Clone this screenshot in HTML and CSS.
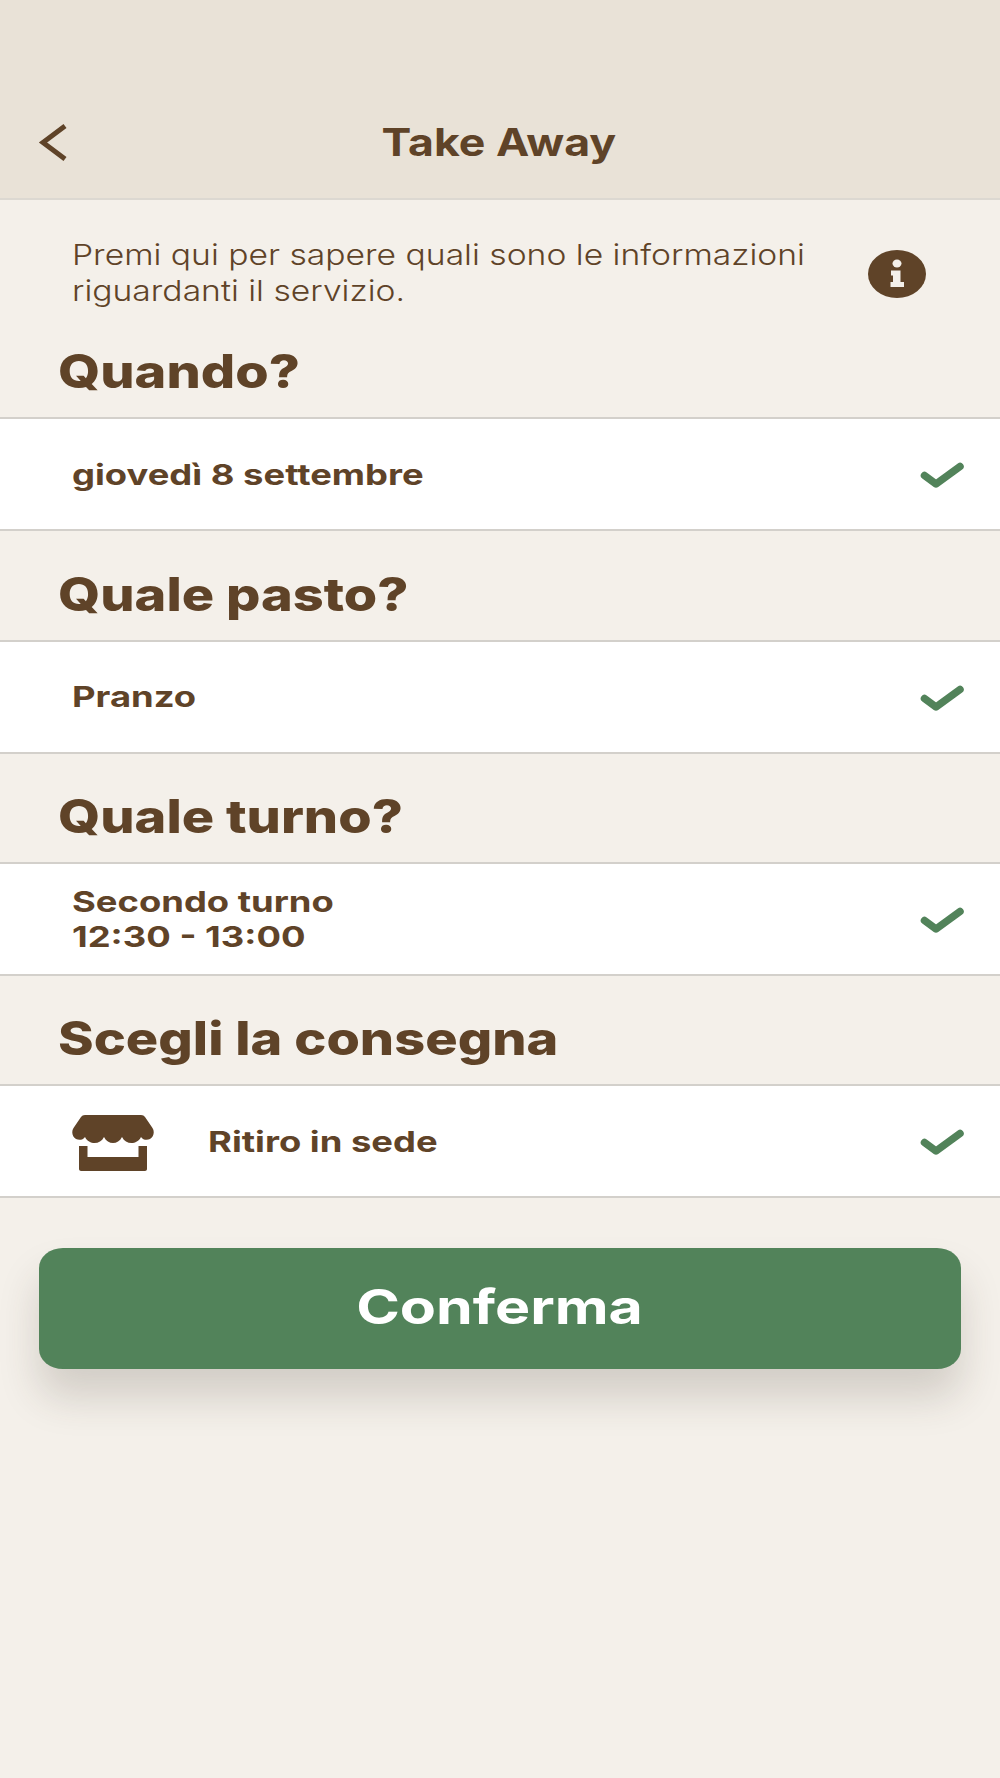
FILE: index.html
```html
<!DOCTYPE html>
<html lang="it">
<head>
<meta charset="utf-8">
<title>Take Away</title>
<link rel="stylesheet" href="styles.css">
</head>
<body>
<header class="topbar">
  <svg class="back" viewBox="0 0 30 40" width="30" height="40"><path d="M27 4 5 20.500 27 37" fill="none" stroke="#5f4328" stroke-width="5"/></svg>
  <h1 class="title"><span class="wide">Take Away</span></h1>
</header>
<main class="content">
  <div class="intro">
    <p class="intro-text"><span class="wide-light">Premi qui per sapere quali sono le informazioni<br>riguardanti il servizio.</span></p>
    <svg class="info" viewBox="0 0 58 48" width="58" height="48"><ellipse cx="29" cy="24" rx="29" ry="24" fill="#5f4328"/><ellipse cx="29" cy="13.500" rx="4.500" ry="4" fill="#f4f0ea"/><path d="M23 20.500h9.500v11.500h3.500v5H22.500v-5H25v-6.500h-2z" fill="#f4f0ea"/></svg>
  </div>
  <section>
    <h2 class="heading"><span class="wide">Quando?</span></h2>
    <div class="row">
      <div class="label"><span class="wide">giovedì 8 settembre</span></div>
      <svg class="check" viewBox="0 0 44 28" width="44" height="28"><path d="M4.500 13.500 16 22 40 4.500" fill="none" stroke="#52835a" stroke-width="7.500" stroke-linejoin="round" stroke-linecap="round"/></svg>
    </div>
  </section>
  <section>
    <h2 class="heading"><span class="wide">Quale pasto?</span></h2>
    <div class="row">
      <div class="label"><span class="wide">Pranzo</span></div>
      <svg class="check" viewBox="0 0 44 28" width="44" height="28"><path d="M4.500 13.500 16 22 40 4.500" fill="none" stroke="#52835a" stroke-width="7.500" stroke-linejoin="round" stroke-linecap="round"/></svg>
    </div>
  </section>
  <section>
    <h2 class="heading"><span class="wide">Quale turno?</span></h2>
    <div class="row">
      <div class="label"><span class="wide">Secondo turno<br>12:30 - 13:00</span></div>
      <svg class="check" viewBox="0 0 44 28" width="44" height="28"><path d="M4.500 13.500 16 22 40 4.500" fill="none" stroke="#52835a" stroke-width="7.500" stroke-linejoin="round" stroke-linecap="round"/></svg>
    </div>
  </section>
  <section>
    <h2 class="heading"><span class="wide">Scegli la consegna</span></h2>
    <div class="row">
      <svg class="store" viewBox="0 0 82 56" width="82" height="56"><path d="M13 0H69C71 0 72 .8 73 2L80.500 13C83 17 81.500 22 78 24C75 25.500 71 25 69 22C67 26 63 28 59.500 28C55.500 28 52 26 50 22C48 26 44.500 28 41 28C37.500 28 34 26 32 22C30 26 26.500 28 22.500 28C19 28 15 26 13 22C11 25 7 25.500 4 24C.5 22-1 17 1.500 13L9 2C10 .8 11 0 13 0Z" fill="#5f4328"/><path d="M7 31h8.500v11h51V31H75v23c0 1.200-1 2-2 2H9c-1 0-2-.8-2-2z" fill="#5f4328"/></svg>
      <div class="label label-icon"><span class="wide">Ritiro in sede</span></div>
      <svg class="check" viewBox="0 0 44 28" width="44" height="28"><path d="M4.500 13.500 16 22 40 4.500" fill="none" stroke="#52835a" stroke-width="7.500" stroke-linejoin="round" stroke-linecap="round"/></svg>
    </div>
  </section>
  <div class="actions">
    <button class="confirm" type="button"><span class="wide">Conferma</span></button>
  </div>
</main>
</body>
</html>
```
FILE: styles.css
```css
* { box-sizing: border-box; }
html, body { margin: 0; padding: 0; }
body {
  width: 1000px;
  height: 1778px;
  background: #f4f0ea;
  color: #5f4328;
  font-family: "Inter", "Liberation Sans", sans-serif;
  overflow: hidden;
}
.wide, .wide-light { display: inline-block; transform-origin: left center; }
.topbar {
  height: 200px;
  background: #e9e2d7;
  border-bottom: 2px solid #dcd8d1;
  display: flex;
  align-items: center;
  justify-content: center;
  padding-top: 86px;
  position: relative;
}
.back { position: absolute; left: 38px; top: 122px; }
.title { margin: 0; font-size: 38px; font-weight: 700; line-height: 44px; }
.title .wide { transform-origin: center; transform: scaleX(1.175); margin-left: -2px; }
.intro {
  height: 109px;
  display: flex;
  align-items: flex-start;
  justify-content: space-between;
  padding: 37px 74px 0 72px;
}
.intro-text { margin: 0; font-size: 29px; font-weight: 300; line-height: 35.6px; }
.wide-light { transform: scaleX(1.16); white-space: nowrap; }
.info { margin-top: 13px; }
.heading {
  margin: 0;
  height: 110.25px;
  padding: 0 0 16px 58px;
  display: flex;
  align-items: flex-end;
  font-size: 46px;
  line-height: 60px;
  font-weight: 800;
  border-bottom: 2px solid #d3d0cb;
}
.heading .wide { transform: scaleX(1.175); white-space: nowrap; }
.row {
  height: 112px;
  background: #fff;
  border-bottom: 2px solid #d3d0cb;
  display: flex;
  align-items: center;
  padding: 0 36px 0 72px;
}
.label { flex: 1; font-size: 29px; line-height: 35px; font-weight: 700; }
.label .wide { transform: scaleX(1.255); white-space: nowrap; }
.label-icon { padding-left: 54px; }
.check { flex: none; margin-top: 4px; }
.store { flex: none; margin-top: 4px; }
.actions { padding: 50px 39px 0 39px; }
.confirm {
  width: 100%;
  height: 121px;
  border: 0;
  border-radius: 24px / 20px;
  background: #52835a;
  color: #fff;
  font-family: inherit;
  font-size: 48px;
  font-weight: 700;
  padding-bottom: 6px;
  box-shadow: 0 28px 40px rgba(60, 50, 40, .18);
}
.confirm .wide { transform-origin: center; transform: scaleX(1.23); }
```
